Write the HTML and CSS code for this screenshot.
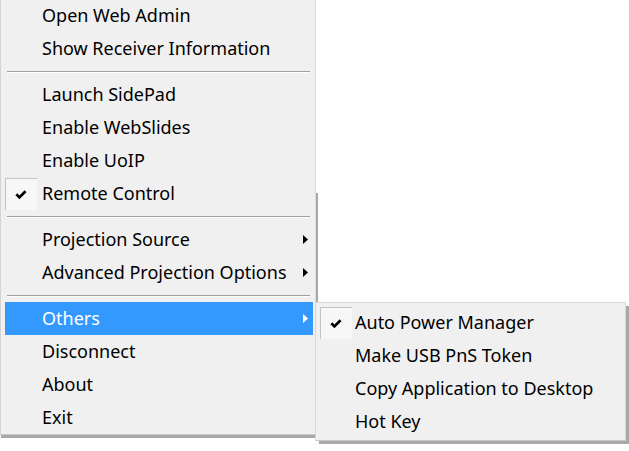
FILE: index.html
```html
<!DOCTYPE html>
<html>
<head>
<meta charset="utf-8">
<link rel="stylesheet" href="styles.css">
</head>
<body>
<div class="menu main">
  <div class="item"><span class="gutter"></span><span class="label">Open Web Admin</span></div>
  <div class="item"><span class="gutter"></span><span class="label">Show Receiver Information</span></div>
  <div class="sep"></div>
  <div class="item"><span class="gutter"></span><span class="label">Launch SidePad</span></div>
  <div class="item"><span class="gutter"></span><span class="label">Enable WebSlides</span></div>
  <div class="item"><span class="gutter"></span><span class="label">Enable UoIP</span></div>
  <div class="item"><span class="gutter check"><svg width="12" height="10" viewBox="0 0 12 10"><path d="M0.4 5.2 L2.3 3.3 L4.4 5.5 L9.6 0.3 L11.5 2.2 L4.4 9.3 Z" fill="#000"/></svg></span><span class="label">Remote Control</span></div>
  <div class="sep"></div>
  <div class="item"><span class="gutter"></span><span class="label">Projection Source</span><svg class="arrow" width="5" height="9" viewBox="0 0 5 9"><path d="M0 0 L5 4.5 L0 9 Z"/></svg></div>
  <div class="item"><span class="gutter"></span><span class="label">Advanced Projection Options</span><svg class="arrow" width="5" height="9" viewBox="0 0 5 9"><path d="M0 0 L5 4.5 L0 9 Z"/></svg></div>
  <div class="sep last"></div>
  <div class="item active"><span class="gutter"></span><span class="label">Others</span><svg class="arrow" width="5" height="9" viewBox="0 0 5 9"><path d="M0 0 L5 4.5 L0 9 Z"/></svg></div>
  <div class="item"><span class="gutter"></span><span class="label">Disconnect</span></div>
  <div class="item"><span class="gutter"></span><span class="label">About</span></div>
  <div class="item"><span class="gutter"></span><span class="label">Exit</span></div>
</div>
<div class="menu submenu">
  <div class="item"><span class="gutter check"><svg width="12" height="10" viewBox="0 0 12 10"><path d="M0.4 5.2 L2.3 3.3 L4.4 5.5 L9.6 0.3 L11.5 2.2 L4.4 9.3 Z" fill="#000"/></svg></span><span class="label">Auto Power Manager</span></div>
  <div class="item"><span class="gutter"></span><span class="label">Make USB PnS Token</span></div>
  <div class="item"><span class="gutter"></span><span class="label">Copy Application to Desktop</span></div>
  <div class="item"><span class="gutter"></span><span class="label">Hot Key</span></div>
</div>
</body>
</html>
```
FILE: styles.css
```css
html, body {
  margin: 0;
  padding: 0;
  background: #ffffff;
  overflow: hidden;
}
body {
  width: 629px;
  height: 451px;
  position: relative;
  font-family: "Noto Sans", "Liberation Sans", sans-serif;
  font-size: 18px;
  color: #000;
}
.menu {
  background: #f0f0f0;
  box-sizing: border-box;
  position: relative;
}
.main {
  width: 316px;
  margin-top: -1px;
  padding: 0 2px 0 4px;
  border-left: 1px solid #d4d4d4;
  border-right: 1px solid #dcdcdc;
  border-bottom: 1px solid #c8c8c8;
  display: flex;
  flex-direction: column;
}
.main::after {
  content: "";
  position: absolute;
  right: -3px;
  top: 194px;
  width: 2px;
  bottom: -4px;
  background: #a8a8a8;
}
.main::before {
  content: "";
  position: absolute;
  left: 0;
  right: -3px;
  bottom: -4px;
  height: 3px;
  background: #a8a8a8;
}
.item {
  height: 33px;
  display: grid;
  grid-template-columns: 32px 1fr auto;
  column-gap: 5px;
  align-items: center;
  padding-right: 5px;
  white-space: nowrap;
}
.item .label {
  line-height: 33px;
}
.gutter {
  height: 32px;
  align-self: end;
  box-sizing: border-box;
}
.check {
  border-top: 1px solid #c4c4c4;
  border-left: 1px solid #c4c4c4;
  background: #f7f7f7;
  display: flex;
  align-items: center;
  justify-content: center;
}
.check svg {
  margin-right: 2px;
}
.arrow {
  fill: #000;
}
.active {
  background: #3399ff;
  color: #ffffff;
}
.active .arrow {
  fill: #ffffff;
}
.sep {
  height: 13px;
  display: flex;
  align-items: center;
  padding: 0 3px 0 2px;
}
.sep::before {
  content: "";
  flex: 1;
  height: 1px;
  background: #a0a0a0;
  border-bottom: 1px solid #ffffff;
}
.submenu {
  position: absolute;
  left: 315px;
  top: 302px;
  width: 311px;
  padding: 3px 2px 2px 4px;
  border: 1px solid #d8d8d8;
  border-bottom-color: #c8c8c8;
  display: flex;
  flex-direction: column;
}
.submenu::after {
  content: "";
  position: absolute;
  right: -4px;
  top: 3px;
  width: 3px;
  bottom: -4px;
  background: #a8a8a8;
}
.submenu::before {
  content: "";
  position: absolute;
  left: 3px;
  right: -4px;
  bottom: -4px;
  height: 3px;
  background: #a8a8a8;
}
.submenu .item {
  column-gap: 3px;
}
```
